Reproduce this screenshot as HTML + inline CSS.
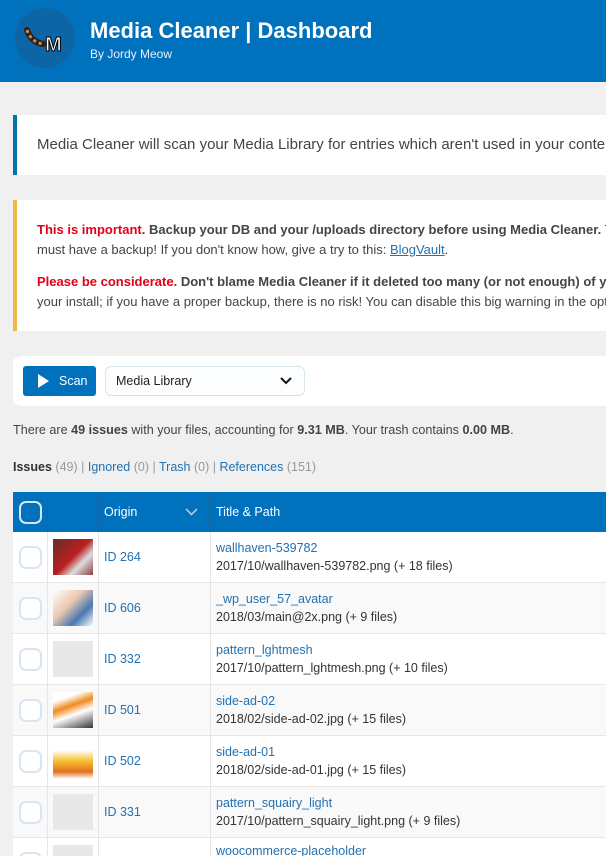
<!DOCTYPE html>
<html><head><meta charset="utf-8"><style>
*{box-sizing:border-box;margin:0;padding:0}
html,body{width:606px;height:856px;overflow:hidden}
body{background:#f0f0f1;font-family:"Liberation Sans",sans-serif;color:#333;position:relative}
.hdr{position:absolute;left:0;top:0;width:606px;height:82px;background:#0071bc}
.logo{position:absolute;left:15px;top:8px;width:60px;height:60px;border-radius:50%;background:#0e65a6}
.h1{position:absolute;left:90px;top:18px;color:#fff;font-size:22px;font-weight:bold;white-space:nowrap}
.by{position:absolute;left:90px;top:47px;color:#e6f0fa;font-size:12px}
.box{position:absolute;left:13px;width:593px;background:#fff;overflow:hidden}
.info{top:115px;height:60px;border-left:4px solid #0073aa}
.info p{position:absolute;left:20px;top:21px;font-size:15px;color:#444;white-space:nowrap}
.warn{top:200px;height:131px;border-left:4px solid #f0b849}
.warn p{position:absolute;left:20px;font-size:13px;white-space:nowrap;color:#444}
.r{color:#e2001a}
.b{font-weight:bold}
a{color:#2271b1;text-decoration:underline}
.panel{position:absolute;left:13px;top:356px;width:593px;height:50px;background:#fff;border-radius:8px 0 0 8px}
.scan{position:absolute;left:10px;top:10px;width:73px;height:30px;background:#0071bc;border-radius:3px;color:#fff;font-size:12.5px}
.sel{position:absolute;left:92px;top:10px;width:200px;height:30px;border:1px solid #d6e4ee;border-radius:6px;background:#fbfdff;font-size:12.5px;padding:7px 10px;color:#222}
.t1{position:absolute;left:13px;top:423px;font-size:12.6px;color:#444;white-space:nowrap}
.tabs{position:absolute;left:13px;top:460px;font-size:12.5px;color:#2271b1;white-space:nowrap}
.g{color:#999}
.th{position:absolute;left:13px;top:492px;width:593px;height:40px;background:#0071bc;color:#fff;font-size:12.5px}
.row{position:absolute;left:13px;width:593px;height:51px;border-bottom:1px solid #e6e6e6;background:#fff}
.cb{position:absolute;left:6px;top:14px;width:23px;height:23px;border:2px solid #d7e6f2;border-radius:7px;background:#fff}
.thumb{position:absolute;left:40px;top:7px;width:40px;height:36px;background:#e8e8e8}
.vl{position:absolute;top:0;bottom:0;width:1px;background:#e6e6e6}
.id{position:absolute;left:91px;top:18px;font-size:12.5px;color:#2271b1}
.tt{position:absolute;left:203px;top:9px;font-size:12.5px;color:#2271b1;white-space:nowrap}
.pp{position:absolute;left:203px;top:27px;font-size:12.5px;color:#333;white-space:nowrap}
</style></head><body>
<div class="hdr">
<div class="logo"><svg width="60" height="60"><path d="M12 22 Q16 34 28 36" stroke="#222" stroke-width="6" fill="none" stroke-linecap="round"/><path d="M12 22 Q16 34 28 36" stroke="#d98a3a" stroke-width="3" fill="none" stroke-dasharray="3 3"/><text x="30" y="43" font-family="Liberation Sans" font-weight="bold" font-size="20" fill="#fff" stroke="#000" stroke-width="1">M</text></svg></div>
<div class="h1">Media Cleaner | Dashboard</div>
<div class="by">By Jordy Meow</div>
</div>
<div class="box info"><p>Media Cleaner will scan your Media Library for entries which aren't used in your content</p></div>
<div class="box warn">
<p style="top:22px"><span class="r b">This is important.</span> <span class="b">Backup your DB and your /uploads directory before using Media Cleaner.</span> The only</p>
<p style="top:42px">must have a backup! If you don't know how, give a try to this: <a>BlogVault</a>.</p>
<p style="top:74px"><span class="r b">Please be considerate.</span> <span class="b">Don't blame Media Cleaner if it deleted too many (or not enough) of your</span></p>
<p style="top:94px">your install; if you have a proper backup, there is no risk! You can disable this big warning in the options</p>
</div>
<div class="panel">
<div class="scan"><svg style="position:absolute;left:14px;top:8px" width="12" height="14"><path d="M1 0 L12 7 L1 14Z" fill="#fff"/></svg><span style="position:absolute;left:36px;top:8px">Scan</span></div>
<div class="sel">Media Library<svg style="position:absolute;right:12px;top:10px" width="12" height="8"><path d="M1 1 L6 6 L11 1" stroke="#111" stroke-width="2" fill="none"/></svg></div>
</div>
<div class="t1">There are <b>49 issues</b> with your files, accounting for <b>9.31 MB</b>. Your trash contains <b>0.00 MB</b>.</div>
<div class="tabs"><b style="color:#333">Issues</b> <span class="g">(49)</span> <span class="g">|</span> Ignored <span class="g">(0)</span> <span class="g">|</span> Trash <span class="g">(0)</span> <span class="g">|</span> References <span class="g">(151)</span></div>
<div class="th">
<div style="position:absolute;left:6px;top:9px;width:23px;height:23px;border:2px solid #d7e6f2;border-radius:7px"></div>
<div class="vl" style="left:34px;background:#1a64a0"></div><div class="vl" style="left:85px;background:#1a64a0"></div><div class="vl" style="left:197px;background:#1a64a0"></div>
<span style="position:absolute;left:91px;top:13px">Origin</span>
<svg style="position:absolute;left:172px;top:16px" width="13" height="8"><path d="M1 1 L6.5 6.5 L12 1" stroke="#a8cbe8" stroke-width="1.6" fill="none"/></svg>
<span style="position:absolute;left:203px;top:13px">Title &amp; Path</span>
</div>
<div style="position:absolute;left:0;top:532px;width:606px;height:324px;overflow:hidden">
<div class="row" style="top:0"><div class="cb"></div><div class="thumb" style="background:linear-gradient(135deg,#6a2a2a,#b82020 50%,#ddd 70%,#8a4040)"></div><div class="vl" style="left:34px"></div><div class="vl" style="left:85px"></div><div class="vl" style="left:197px"></div><div class="id">ID 264</div><div class="tt">wallhaven-539782</div><div class="pp">2017/10/wallhaven-539782.png (+ 18 files)</div></div>
<div class="row" style="top:51px;background:#f9f9f9"><div class="cb"></div><div class="thumb" style="background:linear-gradient(135deg,#fff,#eac8b0 40%,#4a78b0 70%,#fff)"></div><div class="vl" style="left:34px"></div><div class="vl" style="left:85px"></div><div class="vl" style="left:197px"></div><div class="id">ID 606</div><div class="tt">_wp_user_57_avatar</div><div class="pp">2018/03/main@2x.png (+ 9 files)</div></div>
<div class="row" style="top:102px"><div class="cb"></div><div class="thumb"></div><div class="vl" style="left:34px"></div><div class="vl" style="left:85px"></div><div class="vl" style="left:197px"></div><div class="id">ID 332</div><div class="tt">pattern_lghtmesh</div><div class="pp">2017/10/pattern_lghtmesh.png (+ 10 files)</div></div>
<div class="row" style="top:153px;background:#f9f9f9"><div class="cb"></div><div class="thumb" style="background:linear-gradient(160deg,#fff 20%,#f08a20 40%,#fff 60%,#333)"></div><div class="vl" style="left:34px"></div><div class="vl" style="left:85px"></div><div class="vl" style="left:197px"></div><div class="id">ID 501</div><div class="tt">side-ad-02</div><div class="pp">2018/02/side-ad-02.jpg (+ 15 files)</div></div>
<div class="row" style="top:204px"><div class="cb"></div><div class="thumb" style="background:linear-gradient(180deg,#fff 20%,#f5c030 50%,#e07020 80%,#fff)"></div><div class="vl" style="left:34px"></div><div class="vl" style="left:85px"></div><div class="vl" style="left:197px"></div><div class="id">ID 502</div><div class="tt">side-ad-01</div><div class="pp">2018/02/side-ad-01.jpg (+ 15 files)</div></div>
<div class="row" style="top:255px;background:#f9f9f9"><div class="cb"></div><div class="thumb"></div><div class="vl" style="left:34px"></div><div class="vl" style="left:85px"></div><div class="vl" style="left:197px"></div><div class="id">ID 331</div><div class="tt">pattern_squairy_light</div><div class="pp">2017/10/pattern_squairy_light.png (+ 9 files)</div></div>
<div class="row" style="top:306px"><div class="cb"></div><div class="thumb"></div><div class="vl" style="left:34px"></div><div class="vl" style="left:85px"></div><div class="vl" style="left:197px"></div><div class="tt" style="top:6px">woocommerce-placeholder</div></div>
</div>
</body></html>
